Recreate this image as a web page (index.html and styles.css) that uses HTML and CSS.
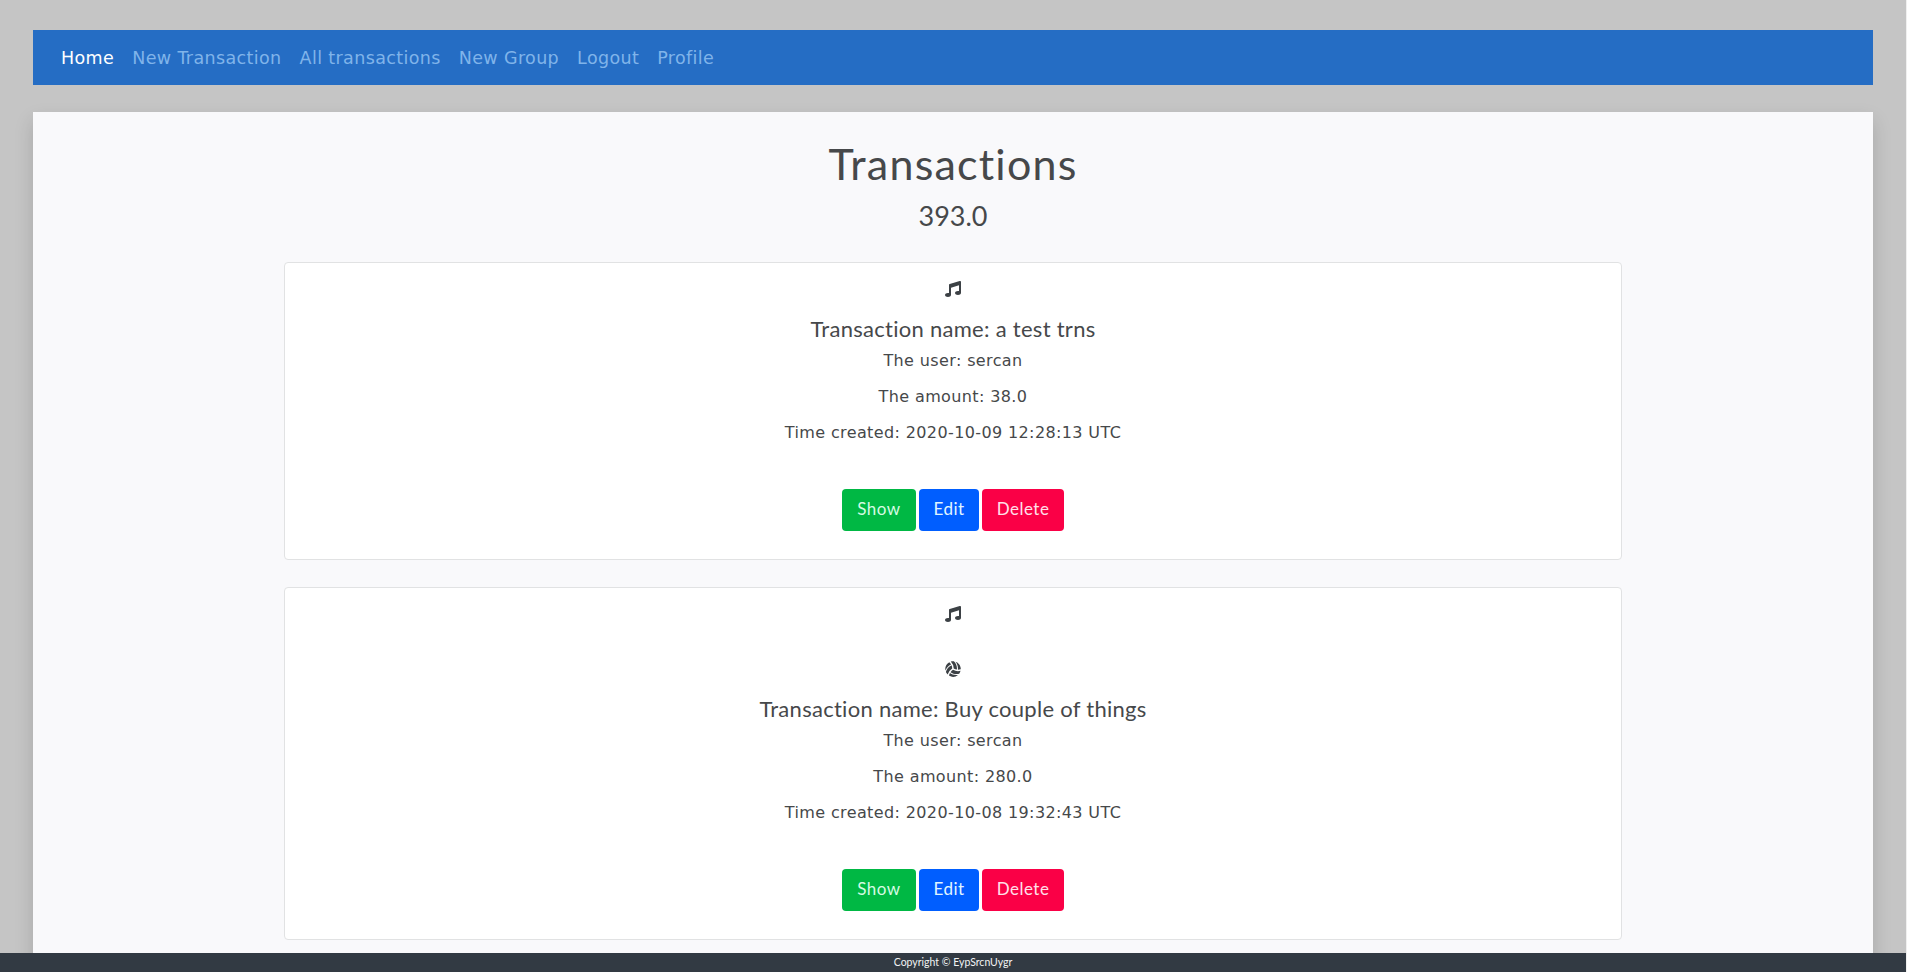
FILE: index.html
```html
<!DOCTYPE html>
<html lang="en">
<head>
<meta charset="utf-8">
<title>Transactions</title>
<link rel="stylesheet" href="styles.css">
</head>
<body>
<svg class="sprite" aria-hidden="true">
  <symbol id="music" viewBox="0 0 512 512"><path d="M511.99 32.01c0-21.71-21.1-37.01-41.6-30.51L150.4 96c-13.3 4.2-22.4 16.5-22.4 30.5v261.42c-10.05-2.38-20.72-3.92-32-3.92-53.02 0-96 28.65-96 64s42.98 64 96 64 96-28.65 96-64V214.31l256-75.02v184.63c-10.05-2.38-20.72-3.92-32-3.92-53.02 0-96 28.65-96 64s42.98 64 96 64 96-28.65 96-64l-.01-351.99z"/></symbol>
  <symbol id="volleyball" viewBox="0 0 512 512"><path d="M231.39 243.48a285.56 285.56 0 0 0-22.7-105.7c-90.8 42.4-157.5 122.4-180.3 216.8a249 249 0 0 0 56.9 81.1 333.87 333.87 0 0 1 146.1-192.2zm-36.9-134.4a284.23 284.23 0 0 0-57.4-70.7c-91 49.8-144.8 152.9-125 262.2 33.4-83.1 98.4-152 182.4-191.5zm187.6 165.1c8.6-99.8-27.3-197.5-97.5-264.4-14.7-1.7-51.6-5.5-98.9 8.5A333.87 333.87 0 0 1 279.19 241a285 285 0 0 0 102.9 33.18zm-124.7 9.5a286.33 286.33 0 0 0-80.2 72.6c82 57.3 184.5 75.1 277.5 47.8a247.15 247.15 0 0 0 42.2-89.9 336.1 336.1 0 0 1-80.9 10.4c-54.6-.1-108.9-14.1-158.6-40.9zm-98.3 99.7c-15.2 26-25.7 54.4-32.1 84.2a247.07 247.07 0 0 0 289-22.1c-112.9 16.1-203.3-24.8-256.9-62.1zm180.3-360.6c55.3 70.4 82.5 161.2 74.6 253.6a286.59 286.59 0 0 0 89.7-14.2c0-2 .3-4 .3-6 0-107.8-68.7-199.1-164.6-233.4z"/></symbol>
</svg>
<nav class="navbar">
  <a class="nav-link active">Home</a>
  <a class="nav-link">New Transaction</a>
  <a class="nav-link">All transactions</a>
  <a class="nav-link">New Group</a>
  <a class="nav-link">Logout</a>
  <a class="nav-link">Profile</a>
</nav>
<main class="panel">
  <h1 class="title">Transactions</h1>
  <h3 class="total">393.0</h3>
  <article class="card">
    <div class="icon-row"><svg class="icon"><use href="#music"/></svg></div>
    <h5 class="card-title">Transaction name: a test trns</h5>
    <p class="card-text">The user: sercan</p>
    <p class="card-text">The amount: 38.0</p>
    <p class="card-text">Time created: 2020-10-09 12:28:13 UTC</p>
    <div class="actions">
      <a class="btn show">Show</a>
      <a class="btn edit">Edit</a>
      <a class="btn delete">Delete</a>
    </div>
  </article>
  <article class="card">
    <div class="icon-row"><svg class="icon"><use href="#music"/></svg></div>
    <div class="icon-row"><svg class="icon"><use href="#volleyball"/></svg></div>
    <h5 class="card-title">Transaction name: Buy couple of things</h5>
    <p class="card-text">The user: sercan</p>
    <p class="card-text">The amount: 280.0</p>
    <p class="card-text">Time created: 2020-10-08 19:32:43 UTC</p>
    <div class="actions">
      <a class="btn show">Show</a>
      <a class="btn edit">Edit</a>
      <a class="btn delete">Delete</a>
    </div>
  </article>
</main>
<footer class="footer">Copyright © EypSrcnUygr</footer>
</body>
</html>
```
FILE: styles.css
```css
* { box-sizing: border-box; margin: 0; }
html { height: 100%; overflow: hidden; }
body {
  height: 100%;
  overflow: hidden;
  padding: 30px 33px 0 33px;
  border-right: 1px solid #efefef;
  background: #c5c5c5;
  color: #46484a;
  font-family: "DejaVu Sans", Verdana, sans-serif;
}
.sprite { display: none; }
.navbar {
  display: flex;
  align-items: center;
  height: 55px;
  padding: 0 28px;
  gap: 18px;
  background: #256dc4;
  font-size: 17.5px;
  letter-spacing: .37px;
}
.nav-link { color: #80b4ea; }
.nav-link.active { color: #fff; }
.panel {
  margin-top: 27px;
  height: 900px;
  padding: 0 251px;
  background: #f9f9fb;
  box-shadow: 0 9px 18px rgba(0, 0, 0, .15);
  text-align: center;
}
.title, .total, .card-title, .btn, .footer {
  font-family: Lato, sans-serif;
  font-weight: 400;
  font-variant-ligatures: none;
}
.title {
  padding-top: 25px;
  font-size: 43px;
  line-height: 54px;
  letter-spacing: 1.2px;
}
.total { margin-top: 8px; font-size: 27px; line-height: 34px; }
.card {
  margin-top: 29px;
  padding-bottom: 28px;
  border: 1px solid #e1e2e3;
  border-radius: 4px;
  background: #fff;
}
.card + .card { margin-top: 27px; }
.icon-row { height: 55px; padding-top: 18px; }
.icon { display: block; width: 16px; height: 16px; margin: 0 auto; fill: #3c4145; }
.card-title {
  margin-top: -2px;
  margin-bottom: 2px;
  font-size: 22px;
  line-height: 25px;
  letter-spacing: .28px;
}
.card-text { font-size: 16px; line-height: 36px; letter-spacing: .38px; }
.actions { display: flex; justify-content: center; gap: 3px; margin-top: 38px; }
.btn {
  height: 42px;
  border-radius: 4px;
  color: #e0f5ff;
  font-size: 17px;
  line-height: 40px;
  letter-spacing: .5px;
}
.show { width: 74px; background: #00b844; color: #d5fbe2; }
.edit { width: 60px; background: #005eff; }
.delete { width: 82px; background: #fa0046; color: #ffe0e9; }
.footer {
  position: fixed;
  left: 0;
  right: 1px;
  bottom: 0;
  height: 19px;
  background: #323a43;
  color: #f1f3f4;
  font-size: 10.5px;
  line-height: 19px;
  text-align: center;
}
```
